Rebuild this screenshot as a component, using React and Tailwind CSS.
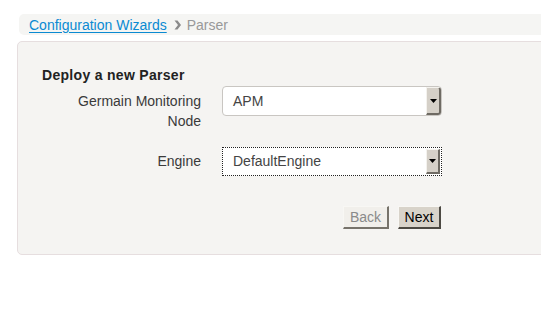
export default function App() {
  const font = { fontFamily: '"Liberation Sans", Arial, sans-serif' };
  return (
    <div className="w-[541px] h-[328px] bg-white overflow-hidden relative" style={font}>
      <div className="ml-[19px] mt-[14px] h-[21px] w-[540px] bg-[#f5f5f3] rounded-l-[5px] flex items-center pl-[10px] text-[14px] leading-[16px]">
        <a className="text-[#0a8ad2] underline underline-offset-[2px]" href="#">Configuration Wizards</a>
        <svg className="ml-[7px] mr-[5px]" width="8" height="10" viewBox="0 0 8 10">
          <path d="M0.5 0.5 L3.5 0.5 L7 5 L3.5 9.5 L0.5 9.5 L4 5 Z" fill="#8a8a8a" />
        </svg>
        <span className="text-[#999999]">Parser</span>
      </div>
      <div className="ml-[17px] mt-[6px] w-[540px] h-[214px] bg-[#f5f4f2] border border-[#e6dedf] rounded-[5px] pl-[24px] pt-[25px]">
        <div className="text-[14px] leading-[16px] font-bold text-[#222] tracking-[0.3px]">Deploy a new Parser</div>
        <div className="flex mt-[3px]">
          <div className="w-[159px] text-right text-[14px] leading-[20px] text-[#3a3a3a] pt-[5px]">
            <div className="ml-auto w-[130px]">Germain Monitoring Node</div>
          </div>
          <div className="ml-[21px] w-[220px] h-[30px] bg-white border border-[#c9c6c2] rounded-[4px] flex items-center relative">
            <span className="pl-[10px] text-[14px] text-[#444]">APM</span>
            <div className="absolute right-0 top-0 bottom-0 w-[15px] bg-[#d5d0c8] border-t border-l border-[#f4f2ee] border-b-[2px] border-r-[2px] border-b-[#6e6a63] border-r-[#6e6a63] flex items-center justify-center rounded-r-[3px]">
              <svg width="7" height="4" viewBox="0 0 7 4"><path d="M0 0 H7 L3.5 4 Z" fill="#000" /></svg>
            </div>
          </div>
        </div>
        <div className="flex mt-[16px]">
          <div className="w-[159px] text-right text-[14px] leading-[20px] text-[#3a3a3a] pt-[4px]">Engine</div>
          <div className="ml-[21px] w-[220px] h-[29px] bg-white border border-dotted border-[#222] flex items-center relative">
            <span className="pl-[10px] text-[14px] text-[#444]">DefaultEngine</span>
            <div className="absolute right-[1px] top-[1px] bottom-[1px] w-[14px] bg-[#d5d0c8] border-t border-l border-[#f4f2ee] border-b-[2px] border-r-[2px] border-b-[#6e6a63] border-r-[#6e6a63] flex items-center justify-center">
              <svg width="7" height="4" viewBox="0 0 7 4"><path d="M0 0 H7 L3.5 4 Z" fill="#000" /></svg>
            </div>
          </div>
        </div>
        <div className="flex w-[399px] justify-end gap-[9px] mt-[30px]">
          <button className="w-[46px] h-[23px] bg-[#f1efeb] text-[#8a8a8a] text-[14px] border-t border-l border-t-[#f8f7f4] border-l-[#f8f7f4] border-b-[2px] border-r-[2px] border-b-[#77736b] border-r-[#77736b]">Back</button>
          <button className="w-[43px] h-[23px] bg-[#d8d3ca] text-black text-[14px] border-t border-l border-t-[#f8f7f4] border-l-[#f8f7f4] border-b-[2px] border-r-[2px] border-b-[#4c4943] border-r-[#4c4943]">Next</button>
        </div>
      </div>
    </div>
  );
}
